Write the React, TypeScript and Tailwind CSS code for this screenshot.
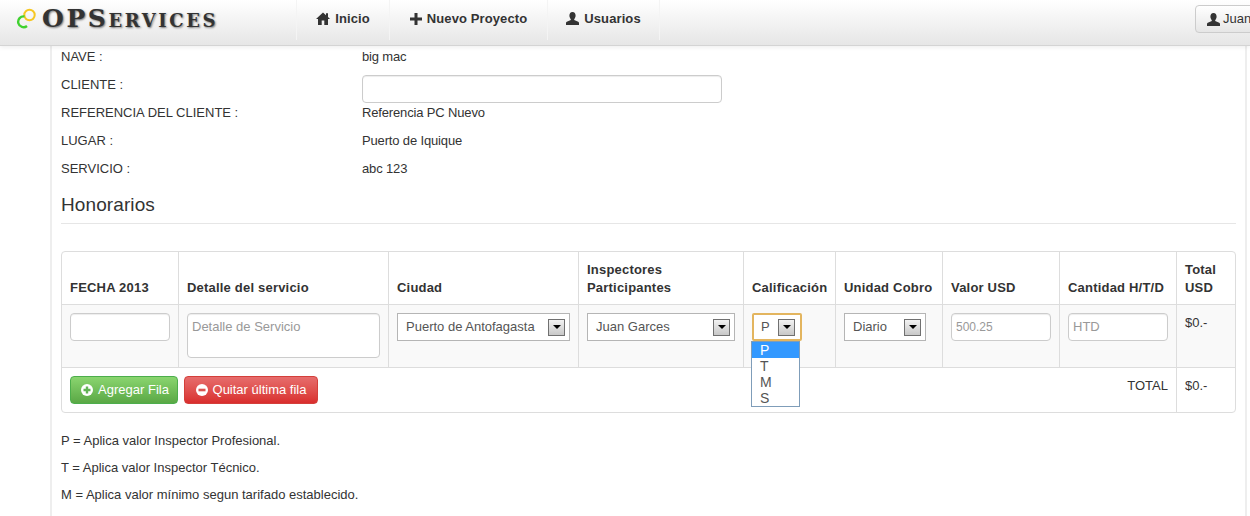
import React from "react";

const font = { fontFamily: '"Liberation Sans", Arial, sans-serif' };

function HomeIcon() {
  return (
    <svg width="14" height="13" viewBox="0 0 14 13" className="fill-[#333]">
      <path d="M7 0.5 L10 3.2 V1.2 H12 V5 L14 7 H12 V13 H8.3 V8.6 H5.7 V13 H2 V7 H0 Z" />
    </svg>
  );
}

function PlusIcon() {
  return (
    <svg width="12" height="12" viewBox="0 0 12 12" className="fill-[#333]">
      <path d="M4.5 0 H7.5 V4.5 H12 V7.5 H7.5 V12 H4.5 V7.5 H0 V4.5 H4.5 Z" />
    </svg>
  );
}

function UserIcon() {
  return (
    <svg width="13" height="13" viewBox="0 0 13 13" className="fill-[#333]">
      <path d="M6.5 0 C8.6 0 9.6 1.6 9.6 3.6 C9.6 5.2 8.9 6.4 8.2 7.2 V8.1 L12.2 9.8 C12.8 10.1 13 10.6 13 11.2 V13 H0 V11.2 C0 10.6 0.2 10.1 0.8 9.8 L4.8 8.1 V7.2 C4.1 6.4 3.4 5.2 3.4 3.6 C3.4 1.6 4.4 0 6.5 0 Z" />
    </svg>
  );
}

function CircleIcon({ minus }: { minus?: boolean }) {
  return (
    <svg width="12" height="12" viewBox="0 0 12 12">
      <circle cx="6" cy="6" r="6" fill="#fff" />
      {minus ? (
        <rect x="2.5" y="4.7" width="7" height="2.6" fill="#d9534f" />
      ) : (
        <path d="M4.8 2.5 H7.2 V4.8 H9.5 V7.2 H7.2 V9.5 H4.8 V7.2 H2.5 V4.8 H4.8 Z" fill="#62b455" />
      )}
    </svg>
  );
}

function Logo() {
  return (
    <div className="w-[246px] flex items-start pl-[15px] pt-[7px]">
      <svg width="24" height="22" viewBox="0 0 24 22" className="shrink-0">
        <circle cx="14.5" cy="8" r="5.2" fill="none" stroke="#f6c723" strokeWidth="2" />
        <path d="M9.5 9.5 A5.4 5.4 0 1 0 12 19" fill="none" stroke="#3fd12f" strokeWidth="2.4" />
      </svg>
      <span
        className="ml-[3px] mt-[-1px] text-[25px] leading-[26px] font-black tracking-[2.6px] text-[#333] [font-variant:small-caps] [text-shadow:1px_1px_2px_#777] whitespace-nowrap"
        style={{ fontFamily: '"DejaVu Serif", serif' }}
      >
        OPServices
      </span>
    </div>
  );
}

function NavItem({ icon, label, width }: { icon: React.ReactNode; label: string; width: string }) {
  return (
    <div className={`${width} h-10 pb-[3px] border-r border-[#f4f4f4] flex items-center justify-center gap-[5px] font-bold tracking-[0.1px] text-[#333]`}>
      {icon}
      <span>{label}</span>
    </div>
  );
}

function InfoRow({ label, children }: { label: string; children: React.ReactNode }) {
  return (
    <div className="flex items-center h-7">
      <div className="w-[301px] shrink-0 text-[#333]">{label}</div>
      <div className="text-[#333] tracking-[-0.15px]">{children}</div>
    </div>
  );
}

function FakeSelect({ value, width, focus }: { value: string; width: string; focus?: boolean }) {
  return (
    <div
      className={`${width} h-7 bg-white flex items-center justify-between ${
        focus ? "border-2 border-[#e3b55f] pl-[7px] pr-[5px] rounded-[2px]" : "border border-[#b5b5b5] pl-2 pr-1"
      } text-[#555]`}
    >
      <span>{value}</span>
      <span className="w-[17px] h-[17px] border border-[#707070] bg-gradient-to-b from-[#f2f2f2] to-[#c8c8c8] flex items-center justify-center">
        <span className="w-0 h-0 border-x-[4px] border-x-transparent border-t-[4px] border-t-black" />
      </span>
    </div>
  );
}

const inputCls =
  "block h-7 bg-white border border-[#ccc] rounded-[4px] shadow-[inset_0_1px_1px_rgba(0,0,0,0.075)] px-1 text-[#999] leading-[26px]";

const headers: [string, string][] = [
  ["w-[116px]", "FECHA 2013"],
  ["w-[210px]", "Detalle del servicio"],
  ["w-[190px]", "Ciudad"],
  ["w-[165px]", "Inspectores Participantes"],
  ["w-[92px]", "Calificación"],
  ["w-[107px]", "Unidad Cobro"],
  ["w-[117px]", "Valor USD"],
  ["w-[117px]", "Cantidad H/T/D"],
  ["w-[59px]", "Total USD"],
];

export default function App() {
  return (
    <div className="h-[516px] w-[1250px] overflow-hidden bg-white text-[13px] leading-5" style={font}>
      <div className="h-[46px] flex border-b border-[#d4d4d4] bg-gradient-to-b from-white to-[#e6e6e6] shadow-[0_2px_4px_rgba(0,0,0,0.06)] relative overflow-hidden">
        <Logo />
        <div className="flex flex-1 items-start">
          <div className="w-[50px] h-10" />
          <div className="w-px h-10 bg-[#f4f4f4]" />
          <NavItem icon={<HomeIcon />} label="Inicio" width="w-[93px]" />
          <NavItem icon={<PlusIcon />} label="Nuevo Proyecto" width="w-[158px]" />
          <NavItem icon={<UserIcon />} label="Usuarios" width="w-[112px]" />
        </div>
        <div className="mt-[5px] mr-[-60px] w-[115px] h-[28px] border border-[#ccc] rounded-[4px] bg-gradient-to-b from-white to-[#e6e6e6] flex items-center gap-[3px] pl-[11px] text-[#333] whitespace-nowrap shrink-0">
          <UserIcon />
          <span>Juan Garces</span>
        </div>
      </div>

      <div className="ml-[50px] w-[1197px] h-[470px] border-x-2 border-x-[#eeeeee] pl-[9px] pr-[9px] overflow-hidden">
        <div className="mt-[-3px]">
          <InfoRow label="NAVE :">big mac</InfoRow>
          <InfoRow label="CLIENTE :">
            <div className="mt-2 w-[360px] h-7 border border-[#ccc] rounded-[4px] bg-white shadow-[inset_0_1px_1px_rgba(0,0,0,0.075)]" />
          </InfoRow>
          <InfoRow label="REFERENCIA DEL CLIENTE :">Referencia PC Nuevo</InfoRow>
          <InfoRow label="LUGAR :">Puerto de Iquique</InfoRow>
          <InfoRow label="SERVICIO :">abc 123</InfoRow>
        </div>

        <h2 className="mt-[10px] pb-[7px] h-[31px] border-b border-[#e6e6e6] text-[19px] tracking-[0.1px] leading-[23px] text-[#333]">Honorarios</h2>

        <table className="mt-[27px] w-[1175px] table-fixed border-separate border-spacing-0 border border-[#ddd] rounded-[4px] text-[#333]">
          <colgroup>
            {headers.map(([w, h]) => (
              <col key={h} className={w} />
            ))}
          </colgroup>
          <thead>
            <tr>
              {headers.map(([, h], i) => (
                <th
                  key={h}
                  className={`h-[52px] align-bottom text-left font-bold px-2 pb-[7px] leading-[18px] tracking-[0.2px] ${i ? "border-l border-[#ddd]" : ""}`}
                >
                  {h}
                </th>
              ))}
            </tr>
          </thead>
          <tbody>
            <tr className="bg-[#f9f9f9]">
              <td className="h-[63px] border-t border-[#ddd] px-2 pt-2 align-top">
                <div className={`${inputCls} w-[100px]`} />
              </td>
              <td className="border-t border-l border-[#ddd] px-2 pt-2 align-top">
                <div className={`${inputCls} w-[193px] h-[45px]`}>Detalle de Servicio</div>
              </td>
              <td className="border-t border-l border-[#ddd] px-2 pt-2 align-top">
                <FakeSelect value="Puerto de Antofagasta" width="w-[173px]" />
              </td>
              <td className="border-t border-l border-[#ddd] px-2 pt-2 align-top">
                <FakeSelect value="Juan Garces" width="w-[148px]" />
              </td>
              <td className="border-t border-l border-[#ddd] px-2 pt-2 align-top relative">
                <FakeSelect value="P" width="w-[50px]" focus />
                <div className="absolute z-10 left-[7px] top-9 w-[49px] bg-white border border-[#7f9db9] text-sm text-[#555] leading-4">
                  <div className="bg-[#3399ff] text-white pl-2">P</div>
                  <div className="pl-2">T</div>
                  <div className="pl-2">M</div>
                  <div className="pl-2">S</div>
                </div>
              </td>
              <td className="border-t border-l border-[#ddd] px-2 pt-2 align-top">
                <FakeSelect value="Diario" width="w-[82px]" />
              </td>
              <td className="border-t border-l border-[#ddd] px-2 pt-2 align-top">
                <div className={`${inputCls} w-[100px] text-xs`}>500.25</div>
              </td>
              <td className="border-t border-l border-[#ddd] px-2 pt-2 align-top">
                <div className={`${inputCls} w-[100px]`}>HTD</div>
              </td>
              <td className="border-t border-l border-[#ddd] px-2 pt-2 align-top">$0.-</td>
            </tr>
            <tr>
              <td colSpan={8} className="h-[45px] border-t border-[#ddd] px-2 pt-2 align-top">
                <div className="flex items-start justify-between">
                  <div className="flex gap-[6px]">
                    <div className="h-7 w-[108px] pl-[2px] rounded-[4px] border border-[#4cae4c] bg-gradient-to-b from-[#8ad56f] to-[#5aa845] text-white flex items-center justify-center gap-[5px]">
                      <CircleIcon />
                      <span>Agregar Fila</span>
                    </div>
                    <div className="h-7 w-[134px] rounded-[4px] border border-[#d43f3a] bg-gradient-to-b from-[#e66c6c] to-[#d92d2d] text-white flex items-center justify-center gap-[5px]">
                      <CircleIcon minus />
                      <span>Quitar última fila</span>
                    </div>
                  </div>
                  <span>TOTAL</span>
                </div>
              </td>
              <td className="border-t border-l border-[#ddd] px-2 pt-2 align-top">$0.-</td>
            </tr>
          </tbody>
        </table>

        <div className="mt-[18px] flex flex-col gap-[7px] text-[#333]">
          <p>P = Aplica valor Inspector Profesional.</p>
          <p>T = Aplica valor Inspector Técnico.</p>
          <p>M = Aplica valor mínimo segun tarifado establecido.</p>
        </div>
      </div>
    </div>
  );
}
